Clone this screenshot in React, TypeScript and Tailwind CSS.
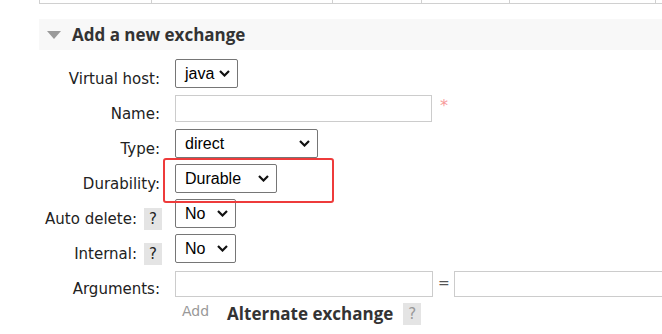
import React from 'react';

const Chevron = () => (
  <svg width="11" height="7" viewBox="0 0 11 7" className="shrink-0">
    <path d="M1 1l4.5 4.5L10 1" fill="none" stroke="#111" strokeWidth="2.2" />
  </svg>
);

// Native-looking select box with a fixed width
const SelectBox = ({ value, width }: { value: string; width: string }) => (
  <div
    className={`${width} h-[29px] shrink-0 flex items-center justify-between pl-[9px] pr-[7px] border border-[#767676] rounded-[2px] bg-white text-[16px] text-black`}
    style={{ fontFamily: '"Liberation Sans", Arial, sans-serif' }}
  >
    <span>{value}</span>
    <Chevron />
  </div>
);

const Help = ({ muted }: { muted?: boolean }) => (
  <span
    className={`w-[18px] h-[22px] flex items-center justify-center bg-[#e4e4e4] text-[15px] ${muted ? 'text-[#999]' : 'text-[#222]'}`}
  >
    ?
  </span>
);

const Row = ({ label, help, children }: { label: string; help?: boolean; children: React.ReactNode }) => (
  <div className="h-[35px] flex items-center">
    <div className={`w-[162px] shrink-0 flex justify-end items-center gap-[7px] ${help ? '' : 'pr-[2px]'}`}>
      <span className="pt-[11px]">{label}</span>
      {help && <span className="pt-[11px]"><Help /></span>}
    </div>
    <div className="ml-[13px] flex items-center shrink-0">{children}</div>
  </div>
);

const cols = ['w-[112px]', 'w-[181px]', 'w-[89px]', 'w-[88px]', 'w-[146px]', 'flex-1'];

export default function App() {
  return (
    <div
      className="w-[662px] h-[334px] overflow-hidden bg-white relative text-[15px] text-[#222]"
      style={{ fontFamily: '"DejaVu Sans", Verdana, sans-serif' }}
    >
      {/* bottom edge of the table above */}
      <div className="ml-[39px] h-[4px] flex border-b border-[#d0d0d0]">
        {cols.map((c, i) => (
          <div key={i} className={`${c} border-l border-[#d0d0d0]`} />
        ))}
      </div>

      {/* Section header */}
      <div
        className="mt-[15px] ml-[39px] h-[31px] bg-[#f8f8f8] flex items-center pl-[8px] gap-[11px]"
        style={{ fontFamily: '"Open Sans", sans-serif' }}
      >
        <svg width="14" height="8" viewBox="0 0 14 8">
          <path d="M0 0h14L7 8z" fill="#9a9a9a" />
        </svg>
        <span className="text-[17px] font-bold text-[#333]">Add a new exchange</span>
      </div>

      {/* Form */}
      <div className="mt-[6px]">
        <Row label="Virtual host:">
          <SelectBox value="java" width="w-[63px]" />
        </Row>
        <Row label="Name:">
          <div className="w-[257px] h-[27px] border border-[#cccccc] bg-white" />
          <span className="ml-[8px] -mt-[6px] text-[16px] text-[#f79a9a]">*</span>
        </Row>
        <Row label="Type:">
          <SelectBox value="direct" width="w-[143px]" />
        </Row>
        <Row label="Durability:">
          <div className="relative">
            <SelectBox value="Durable" width="w-[102px]" />
            <div className="absolute -left-[12px] -top-[6px] w-[171px] h-[45px] border-2 border-[#ee3b3b] rounded-[3px]" />
          </div>
        </Row>
        <Row label="Auto delete:" help>
          <SelectBox value="No" width="w-[61px]" />
        </Row>
        <Row label="Internal:" help>
          <SelectBox value="No" width="w-[61px]" />
        </Row>
        <Row label="Arguments:">
          <div className="w-[258px] h-[26px] border border-[#cccccc] bg-white" />
          <span className="ml-[5px] mr-[4px] text-[#555] text-[14px]">=</span>
          <div className="w-[220px] h-[26px] border border-[#cccccc] bg-white" />
        </Row>
        <div className="ml-[182px] flex items-center">
          <span className="-mt-[5px] text-[#999] text-[14px]">Add</span>
          <span
            className="ml-[18px] text-[17px] font-bold text-[#333]"
            style={{ fontFamily: '"Open Sans", sans-serif' }}
          >
            Alternate exchange
          </span>
          <span className="ml-[10px]">
            <Help muted />
          </span>
        </div>
      </div>
    </div>
  );
}
